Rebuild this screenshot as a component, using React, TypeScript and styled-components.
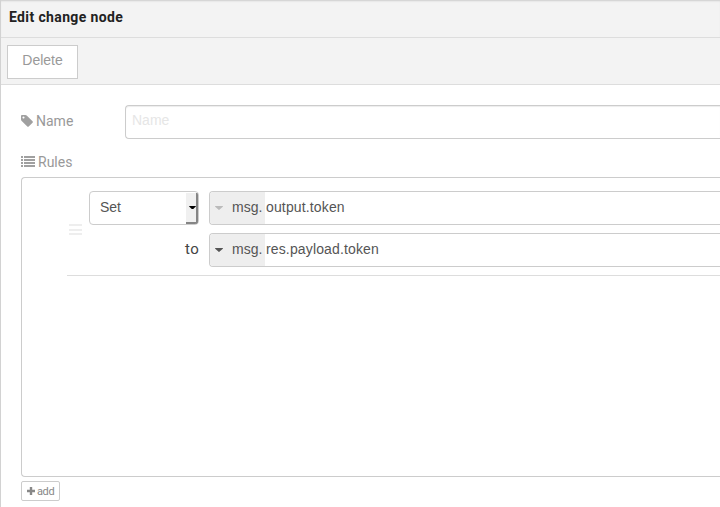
import React from "react";
import styled, { createGlobalStyle } from "styled-components";

const GlobalStyle = createGlobalStyle`
  *, *::before, *::after { box-sizing: border-box; }
  body { margin: 0; overflow: hidden; background: #fff; }
`;

const Tray = styled.div`
  width: 100%;
  height: 507px;
  display: flex;
  flex-direction: column;
  border-left: 1px solid #d2d2d2;
  overflow: hidden;
  background: #fff;
  font: 14px/20px Roboto, sans-serif;
  color: #999;
`;

const Header = styled.header`
  height: 38px;
  flex: none;
  padding: 7px 8px;
  background: #f3f3f3;
  border-bottom: 1px solid #ddd;
  box-shadow: inset 0 2px 2px -1px #ccc;
  color: #222;
  font-weight: 700;
  letter-spacing: 0.37px;
`;

const Toolbar = styled.div`
  height: 47px;
  flex: none;
  padding: 7px 6px;
  background: #f3f3f3;
  border-bottom: 1px solid #ddd;
`;

const Button = styled.button<{ $small?: boolean }>`
  display: flex;
  align-items: center;
  justify-content: ${(p) => (p.$small ? "flex-start" : "center")};
  width: ${(p) => (p.$small ? 39 : 71)}px;
  height: ${(p) => (p.$small ? 20 : 34)}px;
  padding: ${(p) => (p.$small ? "1px 0 0 5px" : "0 0 4px")};
  gap: 2px;
  background: #fff;
  border: 1px solid #ccc;
  border-radius: ${(p) => (p.$small ? 2 : 0)}px;
  color: ${(p) => (p.$small ? "#888" : "#999")};
  font: ${(p) => (p.$small ? "11px/18px Roboto" : '14px/20px "Liberation Sans"')}, sans-serif;
  letter-spacing: ${(p) => (p.$small ? "-0.4px" : "normal")};
`;

const Form = styled.div`
  flex: 1;
  display: flex;
  flex-direction: column;
  align-items: flex-start;
  padding: 20px 0 0 20px;
`;

const FormRow = styled.div`
  display: flex;
  align-items: flex-start;
  width: 100%;
  height: 34px;
`;

const Label = styled.label`
  display: flex;
  align-items: flex-start;
  gap: 3px;
  width: 104px;
  height: 20px;

  svg { margin-top: 3px; }
`;

const NameLabel = styled(Label)`
  margin-top: 6px;
`;

const RulesLabel = styled(Label)`
  margin-top: 13px;
`;

const NameInput = styled.input`
  flex: 1;
  height: 34px;
  padding: 0 6px 4px;
  border: 1px solid #ccc;
  border-right: 0;
  border-radius: 4px 0 0 4px;
  box-shadow: inset 0 1px 1px rgba(0, 0, 0, 0.075);
  outline: 0;
  font: 14px/20px "Liberation Sans", sans-serif;

  &::placeholder { color: #e6e6e6; opacity: 1; }
`;

const RuleList = styled.div`
  width: 100%;
  height: 300px;
  margin: 5px 0 4px;
  padding: 13px 0 0 45px;
  border: 1px solid #ccc;
  border-right: 0;
  border-radius: 4px 0 0 4px;
`;

const Rule = styled.div`
  display: flex;
  align-items: flex-start;
  height: 85px;
  padding: 0 0 8px 2px;
  border-bottom: 1px solid #ddd;
`;

const Handle = styled.div`
  width: 20px;
  height: 12px;
  display: flex;
  margin-top: 33px;
`;

const RuleRows = styled.div`
  flex: 1;
  display: grid;
  grid-template-columns: 110px 1fr;
  grid-template-rows: 34px 34px;
  gap: 8px 10px;
`;

const Select = styled.div`
  display: flex;
  justify-content: space-between;
  padding-left: 10px;
  border: 1px solid #ccc;
  border-radius: 4px;
  overflow: hidden;
  color: #555;
  font: 14px/30px "Liberation Sans", sans-serif;
`;

const SelectArrow = styled.span`
  display: flex;
  align-items: center;
  justify-content: flex-end;
  width: 12px;
  margin-top: 1px;
  background: #f0f0f0;
  border-right: 2px solid #858585;
  border-bottom: 2px solid #858585;
`;

const Connector = styled.span`
  padding-top: 6px;
  text-align: right;
  color: #444;
  font-size: 15px;
  letter-spacing: 0.3px;
`;

const TypedInput = styled.div`
  display: flex;
  border: 1px solid #ccc;
  border-right: 0;
  border-radius: 4px 0 0 4px;
  overflow: hidden;
  color: #555;
  font: 14px/30px "Liberation Sans", sans-serif;
`;

const TypeButton = styled.span`
  display: flex;
  width: 55px;
  padding-left: 5px;
  gap: 9px;
  background: #eee;

  svg { margin-top: 14px; }
`;

const Value = styled.span`
  padding-left: 1px;
  letter-spacing: 0.14px;
`;

const TagIcon = () => (
  <svg width="12" height="14" viewBox="0 0 1536 1792" fill="#a0a0a0">
    <path d="M448 448q0-53-37.5-90.5t-90.5-37.5-90.5 37.5-37.5 90.5 37.5 90.5 90.5 37.5 90.5-37.5 37.5-90.5zm1067 576q0 53-37 90l-491 492q-39 37-91 37-53 0-90-37l-715-716q-38-37-64.5-101t-26.5-117v-416q0-52 38-90t90-38h416q53 0 117 26.5t102 64.5l715 714q37 39 37 91z" />
  </svg>
);

const ListIcon = () => (
  <svg width="14" height="14" fill="#a0a0a0">
    <path d="M0 1h2v2H0zM3 1h11v2H3zM0 4h2v2H0zM3 4h11v2H3zM0 7h2v2H0zM3 7h11v2H3zM0 10h2v2H0zM3 10h11v2H3z" />
  </svg>
);

const BarsIcon = () => (
  <svg width="13" height="12" fill="#eee">
    <path d="M0 0h13v2H0zM0 5h13v2H0zM0 9h13v2H0z" />
  </svg>
);

const PlusIcon = () => (
  <svg width="8" height="9" viewBox="0 0 8 9" fill="#888">
    <path d="M2.800 0h2.400v2.800H8v2.400H5.200V8H2.800V5.200H0V2.800h2.800z" />
  </svg>
);

const Caret = ({ color, width = 8 }: { color: string; width?: number }) => (
  <svg width={width} height={width / 2} viewBox="0 0 8 4" fill={color}>
    <path d="M.4 0h7.200q.6.200.2.700L4.400 3.850q-.4.300-.8 0L.2.700Q-.2.200.4 0z" />
  </svg>
);

const PropertyInput = ({ value, muted }: { value: string; muted?: boolean }) => (
  <TypedInput>
    <TypeButton>
      <Caret color={muted ? "#bbb" : "#555"} />
      msg.
    </TypeButton>
    <Value>{value}</Value>
  </TypedInput>
);

export default function App() {
  return (
    <>
      <GlobalStyle />
      <Tray>
        <Header>Edit change node</Header>
        <Toolbar>
          <Button>Delete</Button>
        </Toolbar>
        <Form>
          <FormRow>
            <NameLabel>
              <TagIcon />
              Name
            </NameLabel>
            <NameInput placeholder="Name" />
          </FormRow>
          <RulesLabel>
            <ListIcon />
            Rules
          </RulesLabel>
          <RuleList>
            <Rule>
              <Handle>
                <BarsIcon />
              </Handle>
              <RuleRows>
                <Select>
                  Set
                  <SelectArrow>
                    <Caret color="#000" width={7} />
                  </SelectArrow>
                </Select>
                <PropertyInput value="output.token" muted />
                <Connector>to</Connector>
                <PropertyInput value="res.payload.token" />
              </RuleRows>
            </Rule>
          </RuleList>
          <Button $small>
            <PlusIcon />
            add
          </Button>
        </Form>
      </Tray>
    </>
  );
}
